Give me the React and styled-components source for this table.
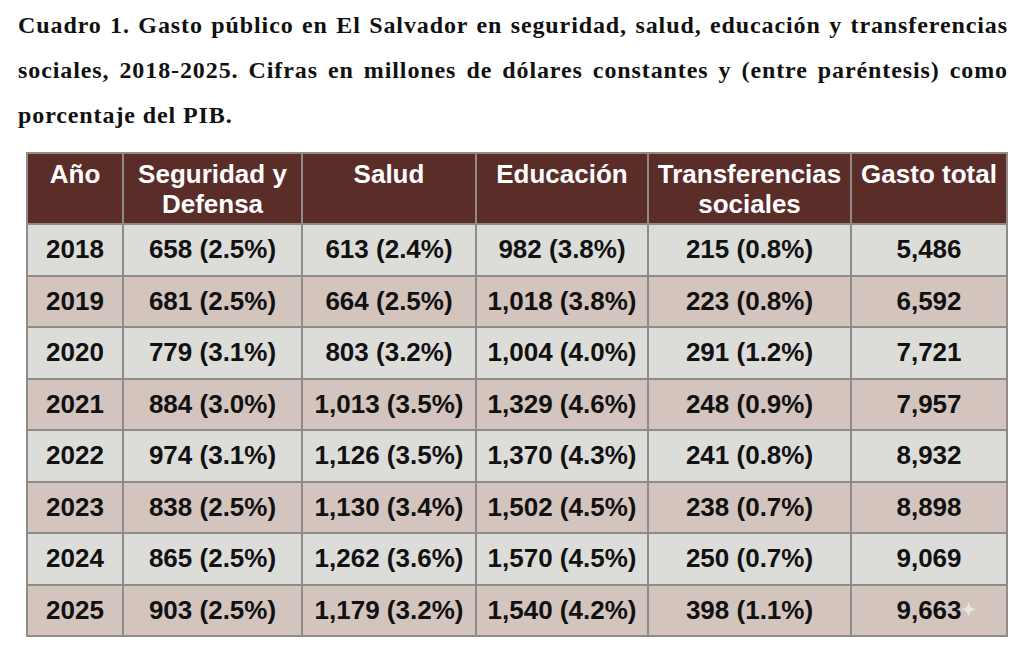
import styled, { createGlobalStyle } from "styled-components";

const rows = [
  ["2018", "658 (2.5%)", "613 (2.4%)", "982 (3.8%)", "215 (0.8%)", "5,486"],
  ["2019", "681 (2.5%)", "664 (2.5%)", "1,018 (3.8%)", "223 (0.8%)", "6,592"],
  ["2020", "779 (3.1%)", "803 (3.2%)", "1,004 (4.0%)", "291 (1.2%)", "7,721"],
  ["2021", "884 (3.0%)", "1,013 (3.5%)", "1,329 (4.6%)", "248 (0.9%)", "7,957"],
  ["2022", "974 (3.1%)", "1,126 (3.5%)", "1,370 (4.3%)", "241 (0.8%)", "8,932"],
  ["2023", "838 (2.5%)", "1,130 (3.4%)", "1,502 (4.5%)", "238 (0.7%)", "8,898"],
  ["2024", "865 (2.5%)", "1,262 (3.6%)", "1,570 (4.5%)", "250 (0.7%)", "9,069"],
  ["2025", "903 (2.5%)", "1,179 (3.2%)", "1,540 (4.2%)", "398 (1.1%)", "9,663"],
];

const headers = [
  ["Año"],
  ["Seguridad y", "Defensa"],
  ["Salud"],
  ["Educación"],
  ["Transferencias", "sociales"],
  ["Gasto total"],
];

const widths = [96, 179, 174, 172, 203, 156];

const titleLines = [
  "Cuadro 1. Gasto público en El Salvador en seguridad, salud, educación y transferencias",
  "sociales, 2018-2025. Cifras en millones de dólares constantes y (entre paréntesis) como",
  "porcentaje del PIB.",
];

export default function App() {
  return (
    <Page>
      <GlobalStyle />
      <Title>
        {titleLines.map((line, i) => (
          <TitleLine key={i} $last={i === titleLines.length - 1}>
            {line}
          </TitleLine>
        ))}
      </Title>
      <Table>
        <colgroup>
          {widths.map((w, i) => (
            <col key={i} style={{ width: w }} />
          ))}
        </colgroup>
        <thead>
          <tr>
            {headers.map((h, i) => (
              <HeadCell key={i}>
                {h.map((line, j) => (
                  <div key={j}>{line}</div>
                ))}
              </HeadCell>
            ))}
          </tr>
        </thead>
        <tbody>
          {rows.map((r, i) => (
            <Row key={r[0]} $odd={i % 2 === 1}>
              {r.map((v, j) => (
                <Cell key={j}>
                  {v}
                  {i === rows.length - 1 && j === r.length - 1 && (
                    <Sparkle>✦</Sparkle>
                  )}
                </Cell>
              ))}
            </Row>
          ))}
        </tbody>
      </Table>
    </Page>
  );
}

const GlobalStyle = createGlobalStyle`
  body {
    margin: 0;
    background: #ffffff;
  }
`;

const Page = styled.div`
  width: 1024px;
  height: 654px;
  padding: 3px 16px 0 18px;
  box-sizing: border-box;
  overflow: hidden;
`;

const Title = styled.div`
  font-family: "Liberation Serif", "Times New Roman", serif;
  font-weight: bold;
  font-size: 24px;
  letter-spacing: 0.9px;
  line-height: 45px;
  color: #111;
`;

const TitleLine = styled.div`
  white-space: nowrap;
  text-align: justify;
  text-align-last: ${(p) => (p.$last ? "left" : "justify")};
`;

const Table = styled.table`
  margin: 14px 0 0 8px;
  border-collapse: collapse;
  table-layout: fixed;
  width: 980px;
  font-family: "Liberation Sans", Arial, sans-serif;
  font-weight: bold;
  border: 2px solid #8e8b89;
`;

const HeadCell = styled.th`
  background: #5a2d29;
  color: #ffffff;
  font-size: 26px;
  line-height: 30px;
  height: 71px;
  vertical-align: top;
  padding: 5px 0 0;
  border: 2px solid #8e8b89;
  box-sizing: border-box;
  white-space: nowrap;
`;

const Row = styled.tr`
  background: ${(p) => (p.$odd ? "#d4c4be" : "#dcdcd9")};
`;

const Cell = styled.td`
  position: relative;
  height: 51.5px;
  font-size: 26px;
  text-align: center;
  vertical-align: middle;
  color: #111;
  padding: 0;
  border: 2px solid #8e8b89;
  box-sizing: border-box;
  white-space: nowrap;
`;

const Sparkle = styled.span`
  position: absolute;
  right: 30px;
  top: 13px;
  font-size: 18px;
  color: #ece4e1;
`;
